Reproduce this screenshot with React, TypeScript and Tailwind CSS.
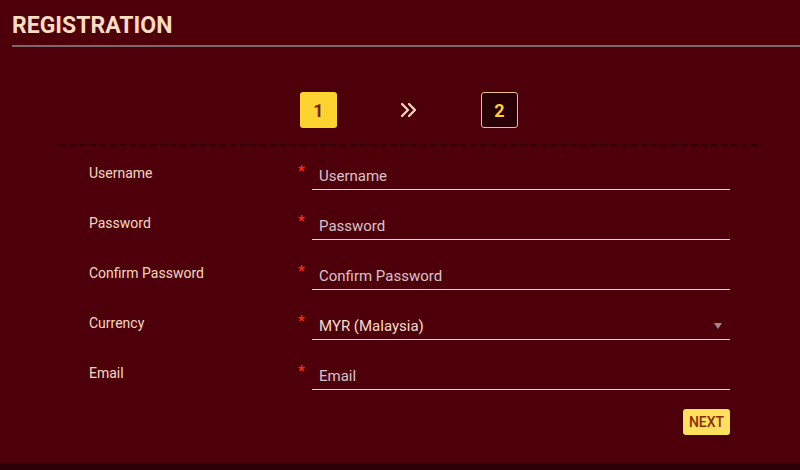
const fields = [
  { label: 'Username', placeholder: 'Username' },
  { label: 'Password', placeholder: 'Password' },
  { label: 'Confirm Password', placeholder: 'Confirm Password' },
  { label: 'Currency', value: 'MYR (Malaysia)', select: true },
  { label: 'Email', placeholder: 'Email' },
];

function Field({ label, placeholder, value, select }: { label: string; placeholder?: string; value?: string; select?: boolean }) {
  return (
    <div className="flex h-[50px] items-start">
      <div className="w-[209px] pt-[1px] text-[14px] leading-5 text-[#f3d9c0]">{label}</div>
      <div className="w-[14px] pt-[1px] text-[15px] font-bold leading-4 text-[#ff2a10]">*</div>
      <div className="relative flex h-[28px] w-[418px] items-center border-b border-[#f3d9c0] pl-[7px] pt-[1px]">
        {select ? (
          <>
            <span className="text-[15px] text-[#f3ddc8]">{value}</span>
            <span className="absolute right-[8px] top-[11px] h-0 w-0 border-x-[4px] border-t-[6px] border-x-transparent border-t-[#9a8a8e]" />
          </>
        ) : (
          <span className="text-[15px] text-[#d8c3cb]">{placeholder}</span>
        )}
      </div>
    </div>
  );
}

export default function App() {
  return (
    <div className="h-[470px] w-[800px] bg-[#2b0006] font-['Roboto',sans-serif]">
      <div className="h-[463px] bg-[#4e000a]">
        <div className="pl-[12px] pt-[9px]">
          <h1 className="h-[36px] pt-[2px] text-[23px] font-bold leading-[30px] text-[#fadcc0]">REGISTRATION</h1>
          <div className="h-[2px] bg-[#7b6a6b]" />
        </div>

        <div className="mt-[45px] flex items-center justify-center gap-[63px] pl-[18px]">
          <div className="flex h-[36px] w-[37px] items-center justify-center rounded-[3px] bg-[#fdd42f] text-[18px] font-bold text-[#7c1d05]">1</div>
          <svg width="18" height="16" viewBox="0 0 18 16" fill="none" stroke="#f6d8c4" strokeWidth="2.2" strokeLinecap="round" strokeLinejoin="round">
            <path d="M2 2l6 6-6 6" />
            <path d="M9 2l6 6-6 6" />
          </svg>
          <div className="flex h-[36px] w-[37px] items-center justify-center rounded-[3px] border border-[#e9c27a] bg-[#280005] text-[18px] font-bold text-[#fdd42f]">2</div>
        </div>

        <div className="ml-[60px] mr-[43px] mt-[16px] border-t-2 border-dashed border-[#2a0004]" />

        <div className="ml-[89px] mt-[16px]">
          {fields.map((f) => (
            <Field key={f.label} {...f} />
          ))}
          <div className="-mt-[3px] flex w-[641px] justify-end">
            <button className="flex h-[26px] w-[47px] items-center justify-center rounded-[3px] bg-[#ffdf5e] text-[14px] font-medium text-[#8a2c05]">NEXT</button>
          </div>
        </div>
      </div>
    </div>
  );
}
